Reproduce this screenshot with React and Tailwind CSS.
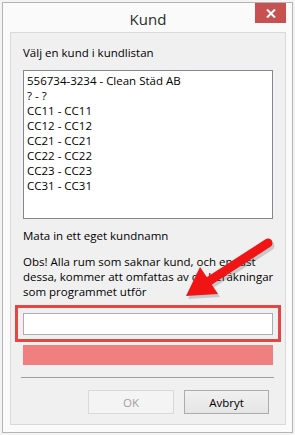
import React from 'react';

const customers = [
  '556734-3234 - Clean Städ AB',
  '? - ?',
  'CC11 - CC11',
  'CC12 - CC12',
  'CC21 - CC21',
  'CC22 - CC22',
  'CC23 - CC23',
  'CC31 - CC31',
];

const App = () => {
  return (
    <div className="relative w-[295px] h-[435px] bg-[#f3f3f3] p-[2px] font-['Open_Sans','Noto_Sans',sans-serif] text-[11.5px] leading-[15px] text-black">
      <div className="flex flex-col h-full border border-[#b4b4b4] bg-[#fafafa] pl-[7px] pr-[6px] pb-[7px]">
        {/* Title bar */}
        <div className="relative h-[29px] flex items-center justify-center">
          <span className="text-[15px] text-[#2b2b2b] mt-[3px]">Kund</span>
          <button className="absolute right-0 top-0 w-[31px] h-[20px] bg-[#c75050] flex items-center justify-center">
            <svg width="10" height="9" viewBox="0 0 10 9">
              <path d="M1 0.5 L9 8.5 M9 0.5 L1 8.5" stroke="white" strokeWidth="2" />
            </svg>
          </button>
        </div>

        {/* Content panel */}
        <div className="flex-1 flex flex-col border border-[#d9d9d9] bg-[#f0f0f0] px-[12px] pt-[12px]">
          <p className="whitespace-nowrap">Välj en kund i kundlistan</p>
          <div className="mt-[10px] h-[149px] border border-[#828790] bg-white pt-[2px] pl-[3px]">
            {customers.map((c, i) => (
              <div key={i} className="whitespace-nowrap">{c}</div>
            ))}
          </div>
          <p className="mt-[9px] whitespace-nowrap">Mata in ett eget kundnamn</p>
          <p className="mt-[11px] whitespace-nowrap">
            Obs! Alla rum som saknar kund, och endast
            <br />
            dessa, kommer att omfattas av de beräkningar
            <br />
            som programmet utför
          </p>
          <div className="mt-[6px] mx-[-8px] border-[3px] border-[#e44646] pt-[5px] pb-[4px] px-[5px]">
            <input className="block w-full h-[22px] border border-[#abadb3] bg-white outline-none" />
          </div>
          <div className="mt-[3px] h-[20px] bg-[#f08080]" />
          <div className="mt-[12px] ml-[-2px] mr-[-1px] h-px bg-[#a0a0a0]" />
          <div className="mt-[12px] flex justify-end gap-[10px] pr-[4px]">
            <button disabled className="w-[86px] h-[24px] border border-[#d9d9d9] bg-[#f4f4f4] text-[#a0a0a0]">
              OK
            </button>
            <button className="w-[85px] h-[24px] border border-[#acacac] bg-gradient-to-b from-[#f0f0f0] to-[#e5e5e5] text-black">
              Avbryt
            </button>
          </div>
        </div>
      </div>

      {/* Annotation arrow */}
      <svg className="absolute left-[175px] top-[235px]" width="100" height="70" viewBox="175 235 100 70">
        <g transform="translate(2 3)" opacity="0.25">
          <line x1="268" y1="243" x2="206" y2="283" stroke="#555" strokeWidth="9" strokeLinecap="round" />
          <polygon points="186,296 200,267 218,294" fill="#555" />
        </g>
        <line x1="268" y1="243" x2="206" y2="283" stroke="#f01414" strokeWidth="9" strokeLinecap="round" />
        <polygon points="186,296 200,267 218,294" fill="#f01414" />
      </svg>
    </div>
  );
};

export default App;
